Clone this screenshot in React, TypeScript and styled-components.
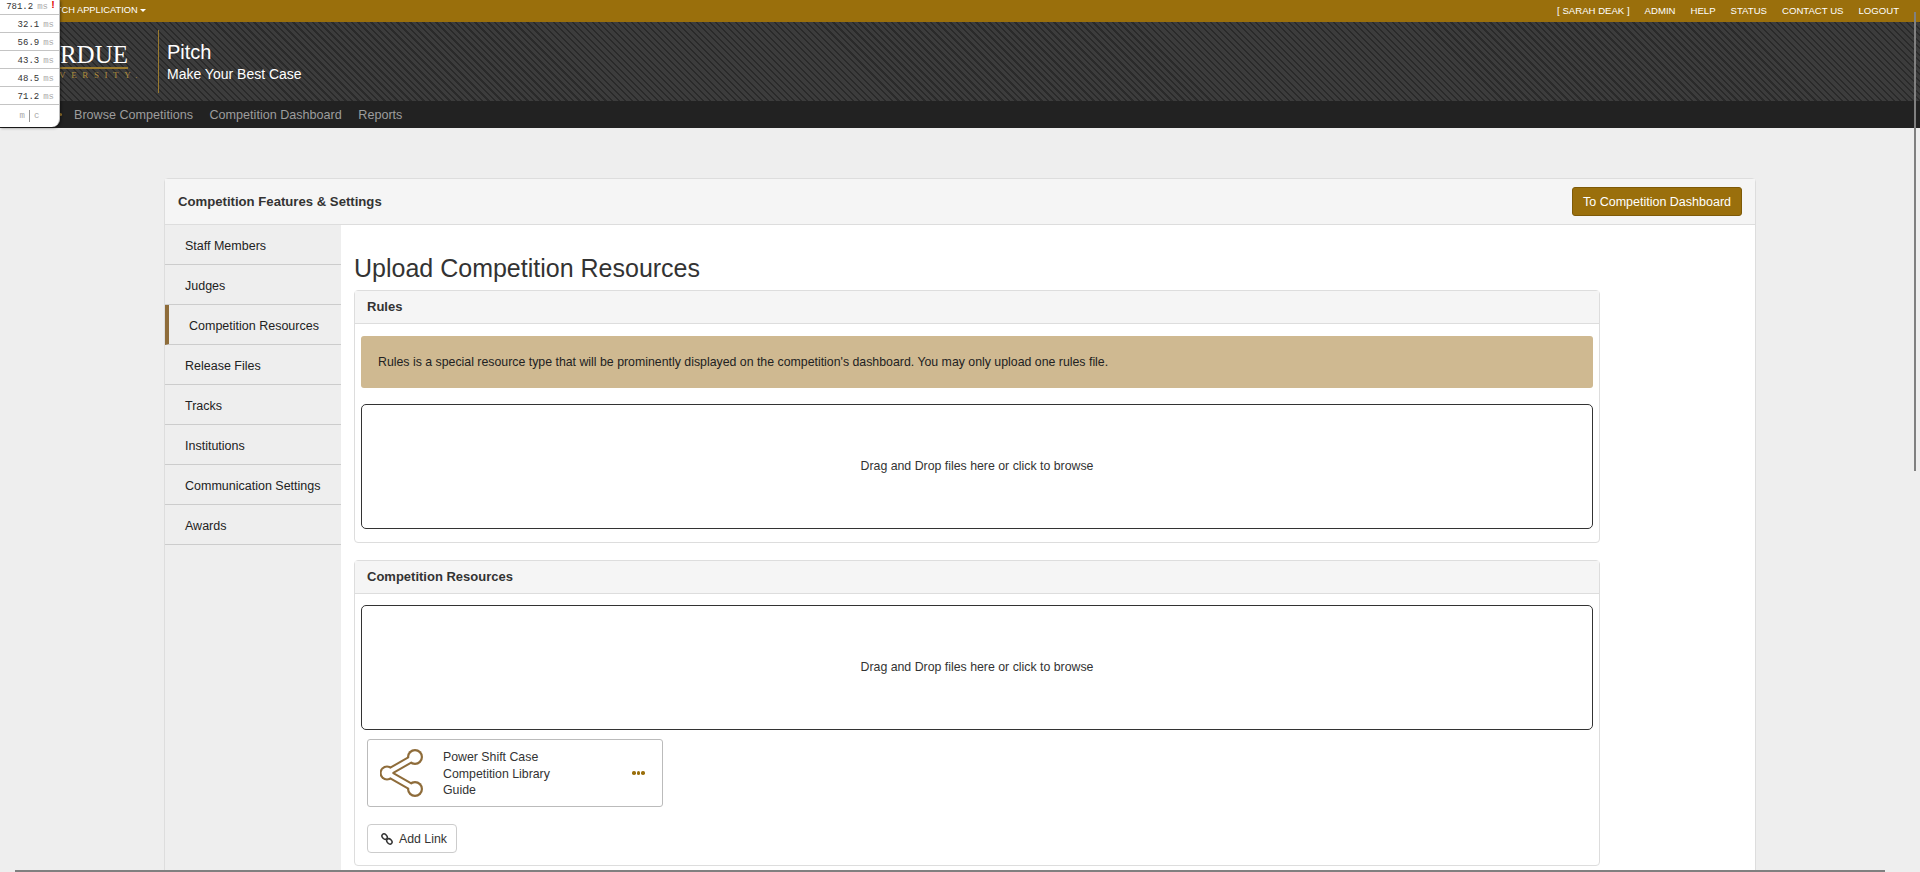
import React from "react";
import styled, { createGlobalStyle } from "styled-components";

const Global = createGlobalStyle`
  html, body { margin: 0; padding: 0; height: 100%; overflow: hidden; background: #eeeeee; }
  body { font-family: "Liberation Sans", Arial, sans-serif; color: #333; }
  * { box-sizing: border-box; }
`;

const Page = styled.div`
  position: relative;
  height: 872px;
  overflow: hidden;
  background: #eeeeee;
`;

const TopBar = styled.div`
  height: 22px;
  background: #9a6f0c;
  color: #fff;
  font-size: 9.3px;
  display: flex;
  align-items: center;
  justify-content: space-between;
  padding: 0 21px 2px 47px;
`;

const AppMenu = styled.div`
  display: flex;
  align-items: center;
  gap: 2px;
`;

const Caret = styled.span`
  width: 0;
  height: 0;
  border-left: 3px solid transparent;
  border-right: 3px solid transparent;
  border-top: 3px solid #fff;
`;

const TopLinks = styled.div`
  display: flex;
  gap: 15px;
  font-size: 9.6px;
`;

const Banner = styled.div`
  height: 79px;
  display: flex;
  align-items: center;
  padding-left: 20px;
  background-color: #333333;
  background-image: repeating-linear-gradient(
    45deg,
    #2a2a2a 0,
    #2a2a2a 1.6px,
    #3c3c3c 1.6px,
    #3c3c3c 4.6px
  );
`;

const Logo = styled.div`
  width: 116px;
  display: flex;
  flex-direction: column;
  align-items: flex-end;
`;

const LogoName = styled.div`
  font-family: "Liberation Serif", serif;
  font-size: 25px;
  line-height: 22px;
  color: #fff;
  padding-right: 8px;
`;

const LogoRule = styled.div`
  align-self: stretch;
  height: 2px;
  margin: 1px 8px 1px 0;
  background: #9a7a2e;
`;

const LogoSub = styled.div`
  font-family: "Liberation Serif", serif;
  font-size: 9px;
  line-height: 10px;
  letter-spacing: 5.6px;
  color: #b08d3c;
  margin-right: -7px;
`;

const Divider = styled.div`
  width: 1px;
  height: 63px;
  margin: 0 8px 0 22px;
  background: #9a7a2e;
`;

const BrandText = styled.div`
  color: #fff;
`;

const BrandTitle = styled.div`
  font-size: 20px;
  line-height: 24px;
`;

const BrandSub = styled.div`
  font-size: 14px;
  line-height: 20px;
`;

const NavBar = styled.div`
  height: 27px;
  background: #222222;
  display: flex;
  align-items: center;
  padding-left: 59px;
  color: #9d9d9d;
  font-size: 12.6px;
`;

const NavDot = styled.span`
  width: 3px;
  height: 3px;
  border-radius: 50%;
  background: #a37c2c;
  margin-right: 12px;
`;

const NavLink = styled.span`
  margin-right: 16.5px;
`;

const Card = styled.div`
  margin: 50px 0 0 164px;
  width: 1592px;
  height: 900px;
  background: #fff;
  border: 1px solid #dddddd;
  border-radius: 4px;
  display: flex;
  flex-direction: column;
`;

const CardHead = styled.div`
  height: 46px;
  flex: none;
  background: #f5f5f5;
  border-bottom: 1px solid #dddddd;
  display: flex;
  align-items: center;
  justify-content: space-between;
  padding: 0 13px;
`;

const CardTitle = styled.div`
  font-size: 13.15px;
  font-weight: 700;
  color: #333;
`;

const DashButton = styled.div`
  width: 170px;
  height: 29px;
  background: #9a6f0c;
  border: 1px solid #7e5a08;
  border-radius: 3px;
  color: #fff;
  font-size: 12.5px;
  display: flex;
  align-items: center;
  justify-content: center;
`;

const CardBody = styled.div`
  flex: 1;
  display: flex;
`;

const Sidebar = styled.div`
  width: 176px;
  flex: none;
  background: #eeeeee;
`;

const SideItem = styled.div<{ $active?: boolean }>`
  height: 40px;
  display: flex;
  align-items: center;
  font-size: 12.5px;
  color: #222;
  padding: 2px 0 0 20px;
  border-bottom: 1px solid #cccccc;
  border-left: ${(p) => (p.$active ? "4px solid #8e6c3a" : "0")};
`;

const Main = styled.div`
  flex: 1;
  padding: 29px 0 0 13px;
`;

const Heading = styled.h1`
  margin: 0 0 8px;
  font-size: 25px;
  line-height: 28px;
  font-weight: 400;
  color: #333;
`;

const Panel = styled.div`
  width: 1246px;
  border: 1px solid #dddddd;
  border-radius: 4px;
  margin-bottom: 17px;
  background: #fff;
`;

const PanelHead = styled.div`
  height: 33px;
  background: #f5f5f5;
  border-bottom: 1px solid #dddddd;
  display: flex;
  align-items: center;
  padding: 0 0 1px 12px;
  font-size: 13px;
  font-weight: 700;
  color: #333;
`;

const PanelBody = styled.div<{ $tight?: boolean }>`
  padding: ${(p) => (p.$tight ? "11px 6px 12px" : "12px 6px 13px")};
`;

const Alert = styled.div`
  height: 52px;
  background: #cfb991;
  border-radius: 3px;
  display: flex;
  align-items: center;
  padding-left: 17px;
  font-size: 12.33px;
  color: #222;
  margin-bottom: 16px;
`;

const DropZone = styled.div`
  height: 125px;
  border: 1.5px solid #333;
  border-radius: 5px;
  display: flex;
  align-items: center;
  justify-content: center;
  padding-bottom: 2px;
  font-size: 12.33px;
  color: #333;
`;

const FileCard = styled.div`
  width: 296px;
  height: 68px;
  margin: 9px 0 17px 6px;
  border: 1px solid #bbbbbb;
  border-radius: 3px;
  display: flex;
  align-items: center;
  padding-left: 12px;
`;

const FileName = styled.div`
  width: 134px;
  margin-left: 17px;
  padding: 2px 10px 0 0;
  font-size: 12.33px;
  line-height: 16.5px;
  color: #333;
`;

const FileMenu = styled.div`
  margin-left: 55px;
  display: flex;
  gap: 1px;
`;

const MenuDot = styled.span`
  width: 3.5px;
  height: 3.5px;
  border-radius: 50%;
  background: #9a6f0c;
`;

const AddLink = styled.div`
  width: 90px;
  height: 29px;
  margin-left: 6px;
  border: 1px solid #cccccc;
  border-radius: 4px;
  display: flex;
  align-items: center;
  gap: 6px;
  padding-left: 13px;
  font-size: 12.33px;
  color: #333;
`;

const Profiler = styled.div`
  position: absolute;
  left: 0;
  top: 0;
  width: 60px;
  background: #fff;
  border-right: 1px solid #bbb;
  border-bottom-right-radius: 8px;
  box-shadow: 1px 1px 3px rgba(0, 0, 0, 0.45);
  font-family: "Liberation Mono", monospace;
  font-size: 9px;
  color: #333;
`;

const ProfRow = styled.div<{ $first?: boolean }>`
  height: ${(p) => (p.$first ? "15px" : "18.1px")};
  border-bottom: 1px solid #c4c4c4;
  display: flex;
  align-items: center;
  justify-content: flex-end;
  gap: 4px;
  padding: ${(p) => (p.$first ? "0 11px 0 0" : "2px 5px 0 0")};
  position: relative;
`;

const Ms = styled.span`
  color: #aaa;
`;

const Bang = styled.span`
  position: absolute;
  left: 50px;
  top: 0;
  color: #e00000;
  font-weight: 700;
  font-size: 10px;
`;

const ProfFoot = styled.div`
  height: 22px;
  display: flex;
  align-items: center;
  justify-content: center;
  gap: 4px;
  color: #aaa;
`;

const FootBar = styled.span`
  width: 1px;
  height: 12px;
  background: #999;
`;

const VScroll = styled.div`
  position: absolute;
  left: 1914px;
  top: 12px;
  width: 2px;
  height: 459px;
  background: #808080;
`;

const HScroll = styled.div`
  position: absolute;
  left: 15px;
  bottom: 0;
  width: 1870px;
  height: 2px;
  background: #808080;
`;

const ShareIcon = () => (
  <svg width="46" height="50" viewBox="0 0 46 50" fill="none">
    <g stroke="#8e6c3a" strokeLinecap="round">
      <path d="M7 25 35 9M7 25 35 41" strokeWidth="8" />
      <circle cx="35" cy="9" r="8" fill="#8e6c3a" strokeWidth="0" />
      <circle cx="35" cy="41" r="8" fill="#8e6c3a" strokeWidth="0" />
      <circle cx="7" cy="25" r="7.5" fill="#8e6c3a" strokeWidth="0" />
    </g>
    <g stroke="#fff" strokeLinecap="round">
      <path d="M7 25 35 9M7 25 35 41" strokeWidth="4" />
      <circle cx="35" cy="9" r="5.8" fill="#fff" strokeWidth="0" />
      <circle cx="35" cy="41" r="5.8" fill="#fff" strokeWidth="0" />
      <circle cx="7" cy="25" r="5.4" fill="#fff" strokeWidth="0" />
    </g>
  </svg>
);

const LinkIcon = () => (
  <svg width="12" height="12" viewBox="0 0 12 12" fill="none" stroke="#333" strokeWidth="1.5">
    <ellipse cx="3.6" cy="3.6" rx="3" ry="2.2" transform="rotate(45 3.6 3.6)" />
    <ellipse cx="8.4" cy="8.4" rx="3" ry="2.2" transform="rotate(45 8.4 8.4)" />
  </svg>
);

const sideItems = [
  "Staff Members",
  "Judges",
  "Competition Resources",
  "Release Files",
  "Tracks",
  "Institutions",
  "Communication Settings",
  "Awards",
];

const timings = ["781.2", "32.1", "56.9", "43.3", "48.5", "71.2"];

export default function App() {
  return (
    <Page>
      <Global />
      <TopBar>
        <AppMenu>
          PITCH APPLICATION
          <Caret />
        </AppMenu>
        <TopLinks>
          <span>[ SARAH DEAK ]</span>
          <span>ADMIN</span>
          <span>HELP</span>
          <span>STATUS</span>
          <span>CONTACT US</span>
          <span>LOGOUT</span>
        </TopLinks>
      </TopBar>
      <Banner>
        <Logo>
          <LogoName>PURDUE</LogoName>
          <LogoRule />
          <LogoSub>UNIVERSITY.</LogoSub>
        </Logo>
        <Divider />
        <BrandText>
          <BrandTitle>Pitch</BrandTitle>
          <BrandSub>Make Your Best Case</BrandSub>
        </BrandText>
      </Banner>
      <NavBar>
        <NavDot />
        <NavLink>Browse Competitions</NavLink>
        <NavLink>Competition Dashboard</NavLink>
        <NavLink>Reports</NavLink>
      </NavBar>
      <Card>
        <CardHead>
          <CardTitle>Competition Features &amp; Settings</CardTitle>
          <DashButton>To Competition Dashboard</DashButton>
        </CardHead>
        <CardBody>
          <Sidebar>
            {sideItems.map((s) => (
              <SideItem key={s} $active={s === "Competition Resources"}>
                {s}
              </SideItem>
            ))}
          </Sidebar>
          <Main>
            <Heading>Upload Competition Resources</Heading>
            <Panel>
              <PanelHead>Rules</PanelHead>
              <PanelBody>
                <Alert>
                  Rules is a special resource type that will be prominently displayed on the competition's dashboard. You may only upload one rules file.
                </Alert>
                <DropZone>Drag and Drop files here or click to browse</DropZone>
              </PanelBody>
            </Panel>
            <Panel>
              <PanelHead>Competition Resources</PanelHead>
              <PanelBody $tight>
                <DropZone>Drag and Drop files here or click to browse</DropZone>
                <FileCard>
                  <ShareIcon />
                  <FileName>Power Shift Case Competition Library Guide</FileName>
                  <FileMenu>
                    <MenuDot />
                    <MenuDot />
                    <MenuDot />
                  </FileMenu>
                </FileCard>
                <AddLink>
                  <LinkIcon />
                  Add Link
                </AddLink>
              </PanelBody>
            </Panel>
          </Main>
        </CardBody>
      </Card>
      <Profiler>
        {timings.map((t, i) => (
          <ProfRow key={t} $first={i === 0}>
            {t} <Ms>ms</Ms>
            {i === 0 && <Bang>!</Bang>}
          </ProfRow>
        ))}
        <ProfFoot>
          m
          <FootBar />c
        </ProfFoot>
      </Profiler>
      <VScroll />
      <HScroll />
    </Page>
  );
}
